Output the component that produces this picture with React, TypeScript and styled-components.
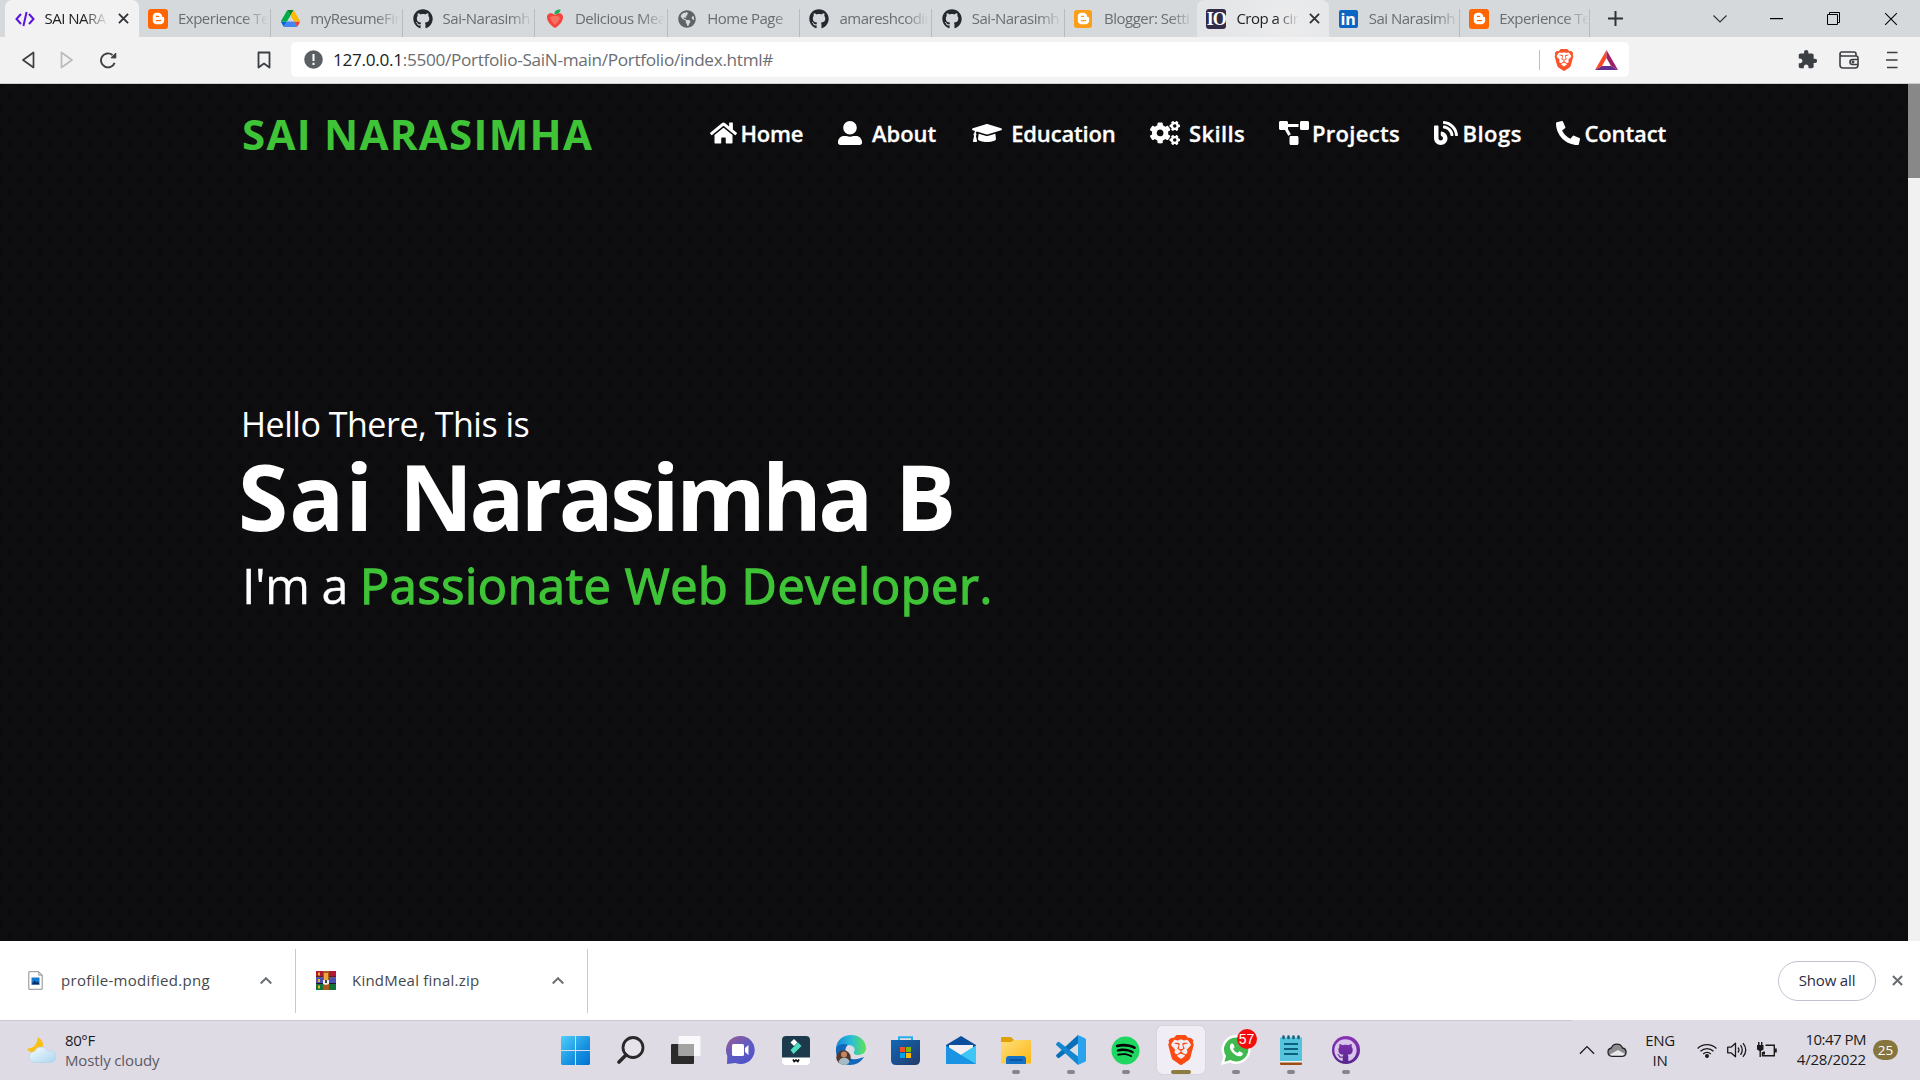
import React from 'react';
import styled, { createGlobalStyle, css } from 'styled-components';
import {
  FaBlog, FaBloggerB, FaCogs, FaGithub, FaGlobeAmericas, FaGraduationCap, FaHome,
  FaPhoneAlt, FaProjectDiagram, FaSpotify, FaUserAlt,
} from 'react-icons/fa';
import { MdExtension } from 'react-icons/md';
import { SiBrave } from 'react-icons/si';

const GlobalStyle = createGlobalStyle`
  * { box-sizing: border-box; }
  html, body { margin: 0; padding: 0; overflow: hidden; }
  body { font-family: 'Open Sans', 'Noto Sans', sans-serif; font-size: 15px; color: #1b1b1b; }
  svg { display: block; flex: none; }
`;

const Desktop = styled.div`
  width: 1920px;
  height: 1080px;
  display: flex;
  flex-direction: column;
  overflow: hidden;
`;

/* ---------- tab strip ---------- */
const TabStrip = styled.div`
  flex: none;
  height: 37px;
  padding-left: 5px;
  display: flex;
  background: #d5d9dc;
`;

const Tab = styled.div<{ $state?: 'active' | 'hover'; $line: boolean; $w: number }>`
  width: ${p => p.$w}px;
  flex: none;
  height: 37px;
  padding-left: 9.5px;
  display: flex;
  align-items: center;
  background: linear-gradient(#b8bcbf, #b8bcbf) right bottom / 1px ${p => (p.$line ? '28px' : '0')} no-repeat;
  ${p => p.$state && css`
    background: ${p.$state === 'active' ? '#f2f2f2' : 'radial-gradient(circle at 90px 22px, #ececed, #e3e5e7 70px)'};
    border-radius: 7px 7px 0 0;
  `}
`;

const Favicon = styled.div`
  width: 20px;
  height: 20px;
  flex: none;
  display: flex;
  align-items: center;
  justify-content: center;
  color: #24292f;
  font-size: 20px;
`;

const BloggerTile = styled(Favicon)<{ $bg: string; $size: number }>`
  background: ${p => p.$bg};
  width: ${p => p.$size}px;
  height: ${p => p.$size}px;
  margin-right: ${p => 20 - p.$size}px;
  border-radius: 3px;
  color: #fff;
  font-size: 13px;
`;

const IoTile = styled(Favicon)`
  background: #322c48;
  border-radius: 3px;
  color: #fff;
  font: bold 18px/20px 'Liberation Serif', serif;
  letter-spacing: -1px;
`;

const LinkedInTile = styled(Favicon)`
  background: #0a66c2;
  width: 19px;
  height: 18px;
  margin-right: 1px;
  border-radius: 2px;
  color: #fff;
  font: bold 16px/18px 'Open Sans', sans-serif;
`;

const TabTitle = styled.span<{ $w: number; $dark?: boolean }>`
  margin-left: 10px;
  width: ${p => p.$w}px;
  overflow: hidden;
  white-space: nowrap;
  letter-spacing: -0.5px;
  line-height: 24px;
  margin-bottom: 1px;
  color: ${p => (p.$dark ? '#202124' : '#6a6d70')};
  mask-image: linear-gradient(to right, #000 calc(100% - 24px), transparent);
`;

const TabClose = styled.div`
  margin-left: 10px;
`;

const NewTab = styled.div`
  width: 50px;
  display: flex;
  align-items: center;
  justify-content: center;
`;

const WindowControls = styled.div`
  margin-left: auto;
  display: flex;
  align-items: center;
  padding-right: 1px;
`;

const WindowButton = styled.div`
  width: 57px;
  display: flex;
  justify-content: center;
`;

/* ---------- address row ---------- */
const Toolbar = styled.div`
  flex: none;
  height: 47px;
  display: flex;
  align-items: center;
  padding: 0 22px 1px 21px;
  background: #f2f2f2;
  border-bottom: 1px solid #cfcfcf;
`;

const NavButtons = styled.div`
  width: 270px;
  display: flex;
  align-items: center;
  gap: 25px;
`;

const Bookmark = styled.div`
  margin-left: auto;
  padding-right: 20px;
`;

const AddressBar = styled.div`
  width: 1338px;
  height: 35px;
  border-radius: 5px;
  background: #fff;
  display: flex;
  align-items: center;
  padding: 0 11px 0 13px;
`;

const Url = styled.span`
  margin-left: 10px;
  padding-top: 1px;
  font-size: 17.2px;
  letter-spacing: -0.31px;
  line-height: 30px;
  color: #6b6e72;
  white-space: nowrap;
`;

const Host = styled.span`
  color: #202124;
`;

const AddressActions = styled.div`
  margin-left: auto;
  display: flex;
  align-items: center;
  color: #fb542b;
`;

const ActionDivider = styled.i`
  width: 1px;
  height: 20px;
  background: #bfbfbf;
  margin-right: 13px;
`;

const AddressIcon = styled.div`
  margin-left: 20px;
`;

const ToolbarActions = styled.div`
  margin-left: auto;
  display: flex;
  align-items: center;
  color: #3b3e42;
`;

const ToolbarAction = styled.div<{ $gap: number }>`
  margin-left: ${p => p.$gap}px;
`;

/* ---------- web page ---------- */
const Viewport = styled.div`
  flex: none;
  height: 857px;
  display: flex;
`;

const Page = styled.main`
  width: 1908px;
  padding-left: 242px;
  background-color: #0e0e10;
  background-image:
    radial-gradient(ellipse 5px 6px at 50% 50%, rgba(0, 0, 0, 0.3), transparent),
    radial-gradient(ellipse 5px 6px at 50% 50%, rgba(0, 0, 0, 0.3), transparent);
  background-size: 20px 24px;
  background-position: 0 0, 10px 12px;
`;

const Scrollbar = styled.div`
  width: 12px;
  background: #f1f1f1;
`;

const ScrollThumb = styled.div`
  height: 94px;
  background: #888;
`;

const SiteHeader = styled.header`
  height: 100px;
  display: flex;
  align-items: center;
`;

const Logo = styled.div`
  width: 468px;
  font-size: 42px;
  font-weight: 700;
  letter-spacing: 1.29px;
  line-height: 60px;
  color: #3fc337;
`;

const Menu = styled.nav`
  display: flex;
  padding-bottom: 2px;
`;

const MenuLink = styled.a<{ $w: number; $gap: number; $ls: number }>`
  width: ${p => p.$w}px;
  display: flex;
  align-items: center;
  gap: ${p => p.$gap}px;
  color: #fff;
  font-size: 22px;
  font-weight: 600;
  letter-spacing: ${p => p.$ls}px;
  line-height: 30px;
  white-space: nowrap;
  -webkit-text-stroke: 0.3px #fff;
`;

const MenuIcon = styled.span<{ $w: number }>`
  width: ${p => p.$w}px;
  flex: none;
  svg { width: ${p => p.$w}px; height: 24px; stroke: none; }
`;

const Hero = styled.section`
  padding-top: 217px;
  color: #fff;
  white-space: nowrap;
`;

const Greeting = styled.div`
  font-size: 34px;
  line-height: 46px;
  letter-spacing: -0.48px;
  margin-left: -1px;
`;

const FullName = styled.h1`
  margin: 0 0 0 -4px;
  display: flex;
  font-size: 91px;
  font-weight: 700;
  line-height: 99px;
`;

const NamePart = styled.span<{ $ls: number; $gap: number }>`
  letter-spacing: ${p => p.$ls}px;
  margin-right: ${p => p.$gap}px;
  white-space: pre;
`;

const Role = styled.div`
  font-size: 48.6px;
  line-height: 79px;
  letter-spacing: -0.58px;
  -webkit-text-stroke: 0.3px #fff;
`;

const RoleName = styled.span`
  letter-spacing: 0.6px;
  color: #3fc337;
  -webkit-text-stroke: 1.3px #3fc337;
`;

/* ---------- downloads ---------- */
const Downloads = styled.div`
  flex: none;
  height: 79px;
  display: flex;
  align-items: center;
  background: #fff;
`;

const DownloadItem = styled.div<{ $w: number; $pad: number; $ls: number }>`
  width: ${p => p.$w}px;
  height: 64px;
  padding: 0 23px 0 ${p => p.$pad}px;
  display: flex;
  align-items: center;
  border-right: 1px solid #c9c9c9;
  letter-spacing: ${p => p.$ls}px;
  color: #46484c;
`;

const DownloadIcon = styled.div<{ $w: number }>`
  width: ${p => p.$w}px;
`;

const DownloadName = styled.span`
  flex: 1;
  margin-bottom: 2px;
`;

const ShowAll = styled.button`
  margin-left: auto;
  width: 98px;
  height: 40px;
  border: 1px solid #c3c1cf;
  border-radius: 20px;
  background: #fff;
  font: 15px 'Open Sans', sans-serif;
  letter-spacing: -0.16px;
  color: #2b2d42;
  padding: 0 0 2px;
`;

const CloseDownloads = styled.div`
  margin: 0 17px 0 16px;
`;

/* ---------- taskbar ---------- */
const Taskbar = styled.footer`
  flex: none;
  height: 60px;
  display: grid;
  grid-template-columns: 548px 825px 1fr;
  background: linear-gradient(#cbc8d1, #cbc8d1) left top / 1572px 1px no-repeat #dedbe5;
`;

const Weather = styled.div`
  display: flex;
  align-items: center;
  gap: 9px;
  padding-left: 27px;
`;

const WeatherText = styled.div`
  line-height: 20px;
  letter-spacing: -0.13px;
  color: #5c5a62;
`;

const Temperature = styled.div`
  letter-spacing: -0.4px;
  color: #1b1b1b;
`;

const AppRow = styled.div`
  display: grid;
  grid-template-columns: repeat(15, 55px);
  justify-items: center;
`;

const AppCell = styled.div<{ $mark?: 'open' | 'active' }>`
  position: relative;
  width: 48px;
  height: 48px;
  margin-top: 6px;
  border-radius: 5px;
  display: flex;
  align-items: center;
  justify-content: center;
  ${p => p.$mark === 'active' && css`
    background: #f0eef4;
    box-shadow: 0 0 1px #aaa7b2;
  `}
  ${p => p.$mark && css`
    &::after {
      content: '';
      position: absolute;
      bottom: 0;
      width: ${p.$mark === 'active' ? 20 : 8}px;
      height: 4px;
      border-radius: 2px;
      background: ${p.$mark === 'active' ? '#8c7c42' : '#87858c'};
    }
  `}
`;

const UnreadBadge = styled.span`
  position: absolute;
  left: 25px;
  top: 3px;
  width: 20px;
  height: 20px;
  border-radius: 50%;
  background: #f40c0c;
  color: #fff;
  font: 14px/20px 'Liberation Sans', sans-serif;
  text-align: center;
`;

const WhatsAppBubble = styled.div`
  display: flex;
`;

const SpotifyDisc = styled.div`
  border-radius: 50%;
  background: radial-gradient(closest-side, #000 85%, transparent 86%);
  color: #1ed760;
  font-size: 29px;
`;

const DesktopCat = styled.div`
  width: 28px;
  height: 28px;
  border-radius: 50%;
  background: linear-gradient(#8a34b4, #56248e);
  color: #d9c7ea;
  display: flex;
  align-items: center;
  justify-content: center;
  font-size: 23px;
`;

const BraveMark = styled.div`
  color: #fb4a12;
`;

const Tray = styled.div`
  display: flex;
  align-items: center;
  padding-left: 206px;
`;

const TrayIcon = styled.div<{ $gap?: number }>`
  margin-left: ${p => p.$gap ?? 0}px;
`;

const Language = styled.div`
  width: 70px;
  padding-right: 4px;
  text-align: center;
  line-height: 20px;
  letter-spacing: -0.3px;
`;

const Clock = styled.div`
  width: 89px;
  text-align: right;
  line-height: 20px;
  padding-bottom: 2px;
  letter-spacing: -0.2px;
`;

const TimeText = styled.div`
  letter-spacing: -0.52px;
`;

const NoticeCount = styled.div`
  margin-left: 7px;
  width: 25px;
  height: 20px;
  border-radius: 10px;
  background: #86763d;
  color: #fff;
  font-size: 13.5px;
  line-height: 20px;
  text-align: center;
`;

/* ---------- drawings ---------- */
const CodeIcon = () => (
  <svg width="20" height="16" viewBox="0 0 20 16" fill="none" stroke="#5a14e0" strokeWidth="2">
    <path d="M6 3 1.500 8 6 13M14 3l4.500 5-4.500 5M11.600 1 8.400 15" />
  </svg>
);
const DriveIcon = () => (
  <svg width="19" height="17" viewBox="0 0 87.300 78">
    <path d="M6.600 66.850l3.850 6.650c.8 1.400 1.950 2.500 3.300 3.300l13.750-23.800H0c0 1.550.4 3.100 1.200 4.500z" fill="#0066da" />
    <path d="M43.650 25L29.900 1.200c-1.350.8-2.500 1.900-3.300 3.300L1.200 48.500C.4 49.900 0 51.450 0 53h27.500z" fill="#00ac47" />
    <path d="M73.550 76.800c1.350-.8 2.500-1.900 3.300-3.300l9.250-16c.8-1.400 1.200-2.950 1.200-4.500H59.800l5.850 11.500z" fill="#ea4335" />
    <path d="M43.650 25L57.400 1.200C56.050.4 54.500 0 52.900 0H34.400c-1.600 0-3.150.45-4.500 1.200z" fill="#00832d" />
    <path d="M59.800 53H27.500L13.750 76.800c1.350.8 2.900 1.200 4.500 1.200h50.800c1.600 0 3.150-.45 4.500-1.200z" fill="#4285f4" />
    <path d="M73.400 26.500L60.700 4.500c-.8-1.400-1.950-2.500-3.300-3.300L43.650 25 59.800 53h27.450c0-1.550-.4-3.100-1.200-4.500z" fill="#ffba00" />
  </svg>
);
const FruitIcon = () => (
  <svg width="18" height="19" viewBox="0 0 18 19">
    <path d="M9 6C5 2.500.5 4.500 1 9c.5 4 4.500 8 8 10 3.500-2 7.500-6 8-10 .5-4.500-4-6.500-8-3z" fill="#f2453d" />
    <path d="M4 8c2-1.500 8-1.500 10 0-1 4-3 6-5 8-2-2-4-4-5-8z" fill="#f57062" />
    <path d="M8.500 5.500C8 2 10 .5 14.500.5 14.500 3.500 12 5 8.500 5.500z" fill="#1fae5b" />
  </svg>
);
const Cross = ({ size = 11, w = 2, color = '#303236' }) => (
  <svg width={size} height={size} viewBox="0 0 12 12" stroke={color} strokeWidth={w}>
    <path d="M1 1l10 10M11 1 1 11" />
  </svg>
);
const ChevronUp = ({ size = 12, w = 2, color = '#6c6f73' }) => (
  <svg width={size} height={size * 0.6} viewBox="0 0 12 7.200" fill="none" stroke={color} strokeWidth={w}>
    <path d="M.7 6.500 6 1.200l5.300 5.300" />
  </svg>
);
const Triangle = ({ right = false }) => (
  <svg width="14" height="18" viewBox="0 0 14 18" fill="none" stroke={right ? '#b9bbbe' : '#3b3e42'} strokeWidth="1.700" strokeLinejoin="round">
    <path d={right ? 'M1.500 1.500v15L12 9z' : 'M12.500 1.500v15L2 9z'} />
  </svg>
);
const Reload = () => (
  <svg width="18" height="18" viewBox="0 0 18 18" fill="none" stroke="#3b3e42" strokeWidth="1.900">
    <path d="M15.600 11.800A7 7 0 1 1 13.500 4" /><path d="M12 6.800 16.800 7V2z" fill="#3b3e42" strokeWidth="1" strokeLinejoin="round" />
  </svg>
);
const BookmarkIcon = () => (
  <svg width="14" height="18" viewBox="0 0 14 18" fill="none" stroke="#3b3e42" strokeWidth="1.800" strokeLinejoin="round">
    <path d="M1.500 1.500h11v15L7 12.500l-5.500 4z" />
  </svg>
);
const InfoIcon = () => (
  <svg width="19" height="19" viewBox="0 0 19 19">
    <circle cx="9.500" cy="9.500" r="9.300" fill="#5b5e63" />
    <path d="M9.500 4v7M9.500 12.800v2.200" stroke="#fff" strokeWidth="2" />
  </svg>
);
const BatIcon = () => (
  <svg width="23" height="20" viewBox="0 0 23 20">
    <path d="M11.500 0 0 20l7-4 4.500-8z" fill="#ff4724" />
    <path d="M11.500 0 23 20l-7-4-4.500-8z" fill="#9e1f63" />
    <path d="M0 20h23l-7-4H7z" fill="#662d91" />
  </svg>
);
const WalletIcon = () => (
  <svg width="20" height="18" viewBox="0 0 20 18" fill="none" stroke="#3b3e42" strokeWidth="1.600">
    <path d="M17 5V3q0-2-2-2H3Q1 1 1 3v11q0 3 3 3h12q3 0 3-3V7q0-2-2-2H3Q1 5 1 3" />
    <path d="M19 8.500h-5.500a2.500 2.500 0 0 0 0 5H19" /><circle cx="14" cy="11" r=".6" />
  </svg>
);
const MenuLines = () => (
  <svg width="12" height="18" viewBox="0 0 12 18" stroke="#3b3e42" strokeWidth="1.700">
    <path d="M1 1.500h10.500M0 9h11.500M1 16.500h10.500" />
  </svg>
);
const ImageFile = () => (
  <svg width="15" height="19" viewBox="0 0 15 19">
    <path d="M.8.7h10l3.400 3.400v14.200H.8z" fill="#fdfdfd" stroke="#8d8f92" />
    <path d="M10.800.7v3.400h3.400" fill="none" stroke="#8d8f92" />
    <path d="M3.500 6.500h8v7h-8z" fill="#1579d0" /><path d="m3.500 13.500 3-4 2 2 1.500-1 1.500 3z" fill="#0b2f63" />
  </svg>
);
const ZipFile = () => (
  <svg width="20" height="19" viewBox="0 0 20 19">
    <path d="M0 0h20v6H0z" fill="#b01838" /><path d="M0 6.500h20v6H0z" fill="#4a4fb5" /><path d="M0 13h20v6H0z" fill="#12743c" />
    <path d="M0 5.500h20v1H0zM0 12h20v1H0z" fill="#201a20" />
    <path d="M7 0h6v19H7z" fill="#a85a18" /><path d="M2 1.500h2v3H2zM2 8h2v3H2zM2 14.500h2v3H2z" fill="#f0b42c" />
    <path d="M8 2h4v8H8z" fill="#f0a53a" /><path d="M7 9h6v4l-3 1-3-1z" fill="#eee" /><path d="M9 9h2v3H9z" fill="#444" />
  </svg>
);
const WeatherIcon = () => (
  <svg width="29" height="26" viewBox="0 0 29 26">
    <defs><linearGradient id="cl" x2="1" y2="1"><stop stopColor="#f6fbff" /><stop offset="1" stopColor="#a9d5ef" /></linearGradient></defs>
    <path d="M10.500 0c7 3 8 12 0 15.500C6 17 1.500 15 0 11.500 6 12 11 7 10.500 0z" fill="#fbbf16" />
    <path d="M8 25.500a5.500 5.500 0 0 1-.5-11A7.500 7.500 0 0 1 21 14a6 6 0 1 1 2 11.500z" fill="url(#cl)" stroke="#b5cfe0" strokeWidth=".6" />
  </svg>
);
const WindowsIcon = () => (
  <svg width="29" height="29" viewBox="0 0 29 29">
    <defs><linearGradient id="win" x2="1" y2="1"><stop stopColor="#4fd0fc" /><stop offset=".6" stopColor="#1690e0" /><stop offset="1" stopColor="#0072d0" /></linearGradient></defs>
    <path d="M1 0h13v14H0V1zM15 0h13l1 1v13H15zM0 15h14v14H1l-1-1zM15 15h14v13l-1 1H15z" fill="url(#win)" />
  </svg>
);
const SearchIcon = () => (
  <svg width="28" height="28" viewBox="0 0 28 28" fill="none" stroke="#29292b">
    <circle cx="16" cy="11.500" r="10" strokeWidth="2.800" fill="#e6e4ea" /><path d="m9 19-7 7" strokeWidth="3.600" strokeLinecap="round" />
  </svg>
);
const TaskViewIcon = () => (
  <svg width="30" height="28" viewBox="0 0 30 28">
    <rect y="8" width="23" height="20" rx="1" fill="#2b2b2b" />
    <rect x="7.500" y="0" width="22" height="20" rx="1" fill="#fff" fillOpacity=".8" />
    <path d="M7.500 8H23v12H7.500z" fill="#a3a3a3" />
  </svg>
);
const ChatIcon = () => (
  <svg width="29" height="28" viewBox="0 0 29 28">
    <defs><linearGradient id="ch" x1="0" y1="0" x2=".7" y2="1"><stop stopColor="#9c5c94" /><stop offset=".6" stopColor="#5b5bc4" /><stop offset="1" stopColor="#5252c8" /></linearGradient></defs>
    <path d="M14.500 0a14 14 0 1 1-5 27L1 28l.3-8A14 14 0 0 1 14.500 0z" fill="url(#ch)" />
    <rect x="6" y="8" width="12" height="12" rx="1.500" fill="#fff" /><path d="m19 12 3.500-3v10L19 16z" fill="#fff" />
  </svg>
);
const FilmoraIcon = () => (
  <svg width="28" height="29" viewBox="0 0 28 29">
    <rect width="28" height="29" rx="4" fill="#fff" /><path d="M4 0h20q4 0 4 4v17.500H0V4q0-4 4-4z" fill="#1d3a4c" />
    <path d="m12 3 3.500 3.500L12 10 8.500 6.500z" fill="#fff" /><path d="m16 6.500 3.500 3.500-8 8-3-4z" fill="#4ee0c1" />
    <path d="m11 23.500 1.200 2 1.800-1.500 1.800 1.500 1.200-2" fill="none" stroke="#111" strokeWidth="1.700" />
  </svg>
);
const EdgeIcon = () => (
  <svg width="30" height="30" viewBox="0 0 30 30">
    <defs><linearGradient id="eg"><stop stopColor="#1785d8" /><stop offset=".5" stopColor="#28bdd8" /><stop offset="1" stopColor="#63e254" /></linearGradient></defs>
    <path d="M0 13C1 5 7 0 15 0c9 0 15 6 15 13 0 5-4 7-8 7-3 0-5-1-4-3 2-4-1-7-6-7-6 0-10 4-12 3z" fill="url(#eg)" />
    <path d="M0 13c3-4 8-5 12-3-4 2-4 13 4 14 5 1 8-1 12-2-3 5-8 8-14 8C5 30-1 22 0 13z" fill="#1267b8" />
    <circle cx="7.500" cy="22.500" r="7.200" fill="#53382b" />
    <circle cx="8" cy="19.500" r="3" fill="#c28763" /><path d="M2.500 27c1-5 10-6 11 0-2 3.500-8 4-11 0z" fill="#a5bbc5" />
  </svg>
);
const StoreIcon = () => (
  <svg width="29" height="29" viewBox="0 0 29 29">
    <defs><linearGradient id="st" x2="1" y2="1"><stop stopColor="#1068b8" /><stop offset="1" stopColor="#253968" /></linearGradient></defs>
    <path d="M8 6V1.200h13V6" fill="none" stroke="#28aeec" strokeWidth="2" />
    <path d="M0 4h29v20q0 5-5 5H5q-5 0-5-5z" fill="url(#st)" />
    <path d="M9 11h5v5H9z" fill="#f25022" /><path d="M15 11h5v5h-5z" fill="#7fba00" /><path d="M9 17h5v5H9z" fill="#00a4ef" /><path d="M15 17h5v5h-5z" fill="#ffb900" />
  </svg>
);
const MailIcon = () => (
  <svg width="30" height="28" viewBox="0 0 30 28">
    <path d="M0 9 15 0l15 9v4H0z" fill="#0c4f9c" /><path d="M3 9h24v8l-12 5L3 17z" fill="#f1f0f2" />
    <path d="M0 9.500 15 19l15-9.500V28H0z" fill="#1b93e3" /><path d="M30 9.500V28L12 17.200l3 1.800z" fill="#3ec6f5" />
  </svg>
);
const FolderIcon = () => (
  <svg width="30" height="27" viewBox="0 0 30 27">
    <defs><linearGradient id="fo" x2="1" y2="1"><stop stopColor="#ffdf7c" /><stop offset="1" stopColor="#fbb713" /></linearGradient></defs>
    <path d="M0 1q0-1 1-1h9l3 3v5H0z" fill="#dfa008" /><path d="M0 5h10l3-2h16q1 0 1 1v22.500H0z" fill="url(#fo)" />
    <path d="M5 27v-5q0-3 3-3h14q3 0 3 3v5z" fill="#1372c8" /><path d="M8.500 23h13" stroke="#084b94" strokeWidth="1.400" />
  </svg>
);
const CodeEditorIcon = () => (
  <svg width="30" height="30" viewBox="0 0 30 30">
    <path d="M22 8.500 3.500 22.800Q2.500 23.500 1.500 22.700L.4 21.600q-.8-.9.100-1.800L22 0z" fill="#0a6fb8" />
    <path d="M22 21.500 3.500 7.200Q2.500 6.500 1.500 7.300L.4 8.400q-.8.900.1 1.800L22 30z" fill="#1485cf" />
    <path d="m22 0 7 3.200q1 .5 1 1.600v20.400q0 1.100-1 1.600L22 30z" fill="#2aa3ef" />
  </svg>
);
const WhatsAppIcon = () => (
  <svg width="30" height="30" viewBox="0 0 30 30">
    <path d="M15.500 0A14.500 14.500 0 1 1 9 27.700L0 30l2.500-8.500A14.500 14.500 0 0 1 15.500 0z" fill="#fff" />
    <path d="M15.500 2.500A12 12 0 1 1 9.500 25l-6 1.700L5 21A12 12 0 0 1 15.500 2.500z" fill="#3fb950" />
    <path d="M10.500 8.500c-3 2-1.500 6.500 1.500 9.500s8 5 9.700 1.500c.5-1.300 0-1.600-3.400-3.200l-1.800 1.700c-2-.6-3.600-2.200-4.300-4.200l1.400-1.800c-1-3-1.600-4-3.100-3.500z" fill="#fff" />
  </svg>
);
const NotepadIcon = () => (
  <svg width="22" height="30" viewBox="0 0 22 30">
    <path d="M0 25h22v4q0 1-1 1H1q-1 0-1-1z" fill="#9b4c13" /><path d="M0 25h22v2.500H0z" fill="#f4f2f2" />
    <path d="M0 2.500h22V26H0z" fill="#56c3dc" /><path d="M4 9h14M4 14h14M4 19h14" stroke="#0b5f7d" strokeWidth="1.800" />
    <path d="M3.500 1.500v1.500M8.500 1.500v1.500M13.500 1.500v1.500M18.500 1.500v1.500" stroke="#16627f" strokeWidth="2.600" strokeLinecap="round" />
  </svg>
);
const CloudIcon = () => (
  <svg width="20" height="14" viewBox="0 0 20 14">
    <path d="M5 13.300A4.200 4.200 0 0 1 4.300 5 6 6 0 0 1 15.500 5a4.200 4.200 0 0 1 0 8.300z" fill="#8d8d8f" />
    <path d="m2 12 9-5 7 4-2 2.300H5z" fill="#e9e8eb" />
    <path d="M5 13.300A4.200 4.200 0 0 1 4.300 5 6 6 0 0 1 15.500 5a4.200 4.200 0 0 1 0 8.300z" fill="none" stroke="#232325" strokeWidth="1.300" />
  </svg>
);
const WifiIcon = () => (
  <svg width="20" height="16" viewBox="0 0 20 16" fill="none" stroke="#1b1b1b" strokeWidth="1.300">
    <path d="M.6 6.500a13.300 13.300 0 0 1 18.800 0M3.500 9.300a9.200 9.200 0 0 1 13 0M6.200 12a5.400 5.400 0 0 1 7.600 0" /><circle cx="10" cy="14" r="1.300" fill="#1b1b1b" />
  </svg>
);
const SpeakerIcon = () => (
  <svg width="20" height="16" viewBox="0 0 20 16" fill="none" stroke="#1b1b1b" strokeWidth="1.300">
    <path d="M.7 5.200h3.300L8.500 1.200v13.600L4 10.800H.7z" strokeLinejoin="round" /><path d="M11 5.500q1.800 2.500 0 5M13.500 3.200q3.500 4.800 0 9.600M16 1.200q5.500 6.800 0 13.600" />
  </svg>
);
const BatteryIcon = () => (
  <svg width="20" height="16" viewBox="0 0 20 16" fill="none" stroke="#1b1b1b" strokeWidth="1.400">
    <path d="M8.500 3.200h8.800v10.600H5.500V10" /><path d="M18.700 6.500v4" strokeWidth="2.200" /><path d="M0 3h6.500v4.500L3.300 9.500 0 7.500zM6 9.500h2v3H6z" fill="#1b1b1b" stroke="none" /><path d="M1.800 0v4M4.700 0v4M3.200 9v6" />
  </svg>
);

const tabs: { title: string; icon: React.ReactNode; state?: 'active' | 'hover'; line: boolean; w?: number }[] = [
  { title: 'SAI NARA', icon: <Favicon><CodeIcon /></Favicon>, state: 'active', line: false, w: 133.5 },
  { title: 'Experience Te', icon: <BloggerTile $bg="#ff6600" $size={20}><FaBloggerB /></BloggerTile>, line: true },
  { title: 'myResumeFin', icon: <Favicon><DriveIcon /></Favicon>, line: true },
  { title: 'Sai-Narasimh', icon: <Favicon><FaGithub /></Favicon>, line: true },
  { title: 'Delicious Mea', icon: <Favicon><FruitIcon /></Favicon>, line: true },
  { title: 'Home Page', icon: <Favicon><FaGlobeAmericas size={18} color="#5f6266" /></Favicon>, line: true },
  { title: 'amareshcodin', icon: <Favicon><FaGithub /></Favicon>, line: true },
  { title: 'Sai-Narasimh', icon: <Favicon><FaGithub /></Favicon>, line: true },
  { title: 'Blogger: Setti', icon: <BloggerTile $bg="#fb9e18" $size={18}><FaBloggerB /></BloggerTile>, line: false },
  { title: 'Crop a circ', icon: <IoTile>IO</IoTile>, state: 'hover', line: false },
  { title: 'Sai Narasimh', icon: <LinkedInTile>in</LinkedInTile>, line: true, w: 130.5 },
  { title: 'Experience Te', icon: <BloggerTile $bg="#ff6600" $size={20}><FaBloggerB /></BloggerTile>, line: true, w: 130.5 },
];

const links = [
  { label: 'Home', icon: <FaHome />, iconW: 27, w: 128.4, gap: 3.5, ls: -0.25 },
  { label: 'About', icon: <FaUserAlt />, iconW: 24, w: 133.3, gap: 9.5, ls: 0 },
  { label: 'Education', icon: <FaGraduationCap />, iconW: 30, w: 178.8, gap: 9.5, ls: -0.17 },
  { label: 'Skills', icon: <FaCogs />, iconW: 30, w: 129, gap: 8.5, ls: 0.38 },
  { label: 'Projects', icon: <FaProjectDiagram />, iconW: 30, w: 155, gap: 2.5, ls: 0.3 },
  { label: 'Blogs', icon: <FaBlog />, iconW: 24, w: 122, gap: 4, ls: 0.5 },
  { label: 'Contact', icon: <FaPhoneAlt />, iconW: 24, w: 115, gap: 4, ls: -0.12 },
];

const apps: { icon: React.ReactNode; mark?: 'open' | 'active' }[] = [
  { icon: <WindowsIcon /> },
  { icon: <SearchIcon /> },
  { icon: <TaskViewIcon /> },
  { icon: <ChatIcon /> },
  { icon: <FilmoraIcon /> },
  { icon: <EdgeIcon /> },
  { icon: <StoreIcon /> },
  { icon: <MailIcon /> },
  { icon: <FolderIcon />, mark: 'open' },
  { icon: <CodeEditorIcon />, mark: 'open' },
  { icon: <SpotifyDisc><FaSpotify /></SpotifyDisc>, mark: 'open' },
  { icon: <BraveMark><SiBrave size={30} /></BraveMark>, mark: 'active' },
  { icon: <WhatsAppBubble><WhatsAppIcon /><UnreadBadge>57</UnreadBadge></WhatsAppBubble>, mark: 'open' },
  { icon: <NotepadIcon />, mark: 'open' },
  { icon: <DesktopCat><FaGithub /></DesktopCat>, mark: 'open' },
];

export default function App() {
  return (
    <Desktop>
      <GlobalStyle />
      <TabStrip>
        {tabs.map((t, i) => (
          <Tab key={i} $state={t.state} $line={t.line} $w={t.w ?? 132.3}>
            {t.icon}
            <TabTitle $w={t.state ? 63 : 90} $dark={!!t.state}>{t.title}</TabTitle>
            {t.state && <TabClose><Cross /></TabClose>}
          </Tab>
        ))}
        <NewTab>
          <svg width="15" height="15" viewBox="0 0 15 15" stroke="#303236" strokeWidth="2"><path d="M7.500 0v15M0 7.500h15" /></svg>
        </NewTab>
        <WindowControls>
          <WindowButton><svg width="14" height="8" viewBox="0 0 14 8" fill="none" stroke="#303236" strokeWidth="1.200"><path d="m.5.5 6.500 6.500L13.500.5" /></svg></WindowButton>
          <WindowButton><svg width="13" height="2" viewBox="0 0 13 2"><path d="M0 0h13v1.200H0z" /></svg></WindowButton>
          <WindowButton><svg width="13" height="13" viewBox="0 0 13 13" fill="none" stroke="#000"><path d="M.5 2.500h10v10H.5zM2.500 2.500v-2h10v10h-2" /></svg></WindowButton>
          <WindowButton><Cross size={14} w={0.9} color="#000" /></WindowButton>
        </WindowControls>
      </TabStrip>

      <Toolbar>
        <NavButtons>
          <Triangle />
          <Triangle right />
          <Reload />
          <Bookmark><BookmarkIcon /></Bookmark>
        </NavButtons>
        <AddressBar>
          <InfoIcon />
          <Url><Host>127.0.0.1</Host>:5500/Portfolio-SaiN-main/Portfolio/index.html#</Url>
          <AddressActions>
            <ActionDivider />
            <SiBrave size={22} />
            <AddressIcon><BatIcon /></AddressIcon>
          </AddressActions>
        </AddressBar>
        <ToolbarActions>
          <MdExtension size={21} />
          <ToolbarAction $gap={21}><WalletIcon /></ToolbarAction>
          <ToolbarAction $gap={27}><MenuLines /></ToolbarAction>
        </ToolbarActions>
      </Toolbar>

      <Viewport>
        <Page>
          <SiteHeader>
            <Logo>SAI NARASIMHA</Logo>
            <Menu>
              {links.map(l => (
                <MenuLink key={l.label} $w={l.w} $gap={l.gap} $ls={l.ls}>
                  <MenuIcon $w={l.iconW}>{l.icon}</MenuIcon>
                  {l.label}
                </MenuLink>
              ))}
            </Menu>
          </SiteHeader>
          <Hero>
            <Greeting>Hello There, This is</Greeting>
            <FullName>
              <NamePart $ls={1.1} $gap={0}>{'Sai '}</NamePart>
              <NamePart $ls={-3.5} $gap={5}>{'Narasimha '}</NamePart>
              <NamePart $ls={0} $gap={0}>B</NamePart>
            </FullName>
            <Role>I'm a <RoleName>Passionate Web Developer.</RoleName></Role>
          </Hero>
        </Page>
        <Scrollbar><ScrollThumb /></Scrollbar>
      </Viewport>

      <Downloads>
        <DownloadItem $w={296} $pad={28} $ls={0.3}>
          <DownloadIcon $w={33}><ImageFile /></DownloadIcon>
          <DownloadName>profile-modified.png</DownloadName>
          <ChevronUp />
        </DownloadItem>
        <DownloadItem $w={292} $pad={20} $ls={0.22}>
          <DownloadIcon $w={36}><ZipFile /></DownloadIcon>
          <DownloadName>KindMeal final.zip</DownloadName>
          <ChevronUp />
        </DownloadItem>
        <ShowAll>Show all</ShowAll>
        <CloseDownloads><Cross size={11} w={2.2} color="#6a6d70" /></CloseDownloads>
      </Downloads>

      <Taskbar>
        <Weather>
          <WeatherIcon />
          <WeatherText>
            <Temperature>80°F</Temperature>
            Mostly cloudy
          </WeatherText>
        </Weather>
        <AppRow>
          {apps.map((a, i) => <AppCell key={i} $mark={a.mark}>{a.icon}</AppCell>)}
        </AppRow>
        <Tray>
          <ChevronUp size={16} w={1} color="#1b1b1b" />
          <TrayIcon $gap={12}><CloudIcon /></TrayIcon>
          <Language>ENG<br />IN</Language>
          <TrayIcon><WifiIcon /></TrayIcon>
          <TrayIcon $gap={10}><SpeakerIcon /></TrayIcon>
          <TrayIcon $gap={10}><BatteryIcon /></TrayIcon>
          <Clock>
            <TimeText>10:47 PM</TimeText>
            4/28/2022
          </Clock>
          <NoticeCount>25</NoticeCount>
        </Tray>
      </Taskbar>
    </Desktop>
  );
}
